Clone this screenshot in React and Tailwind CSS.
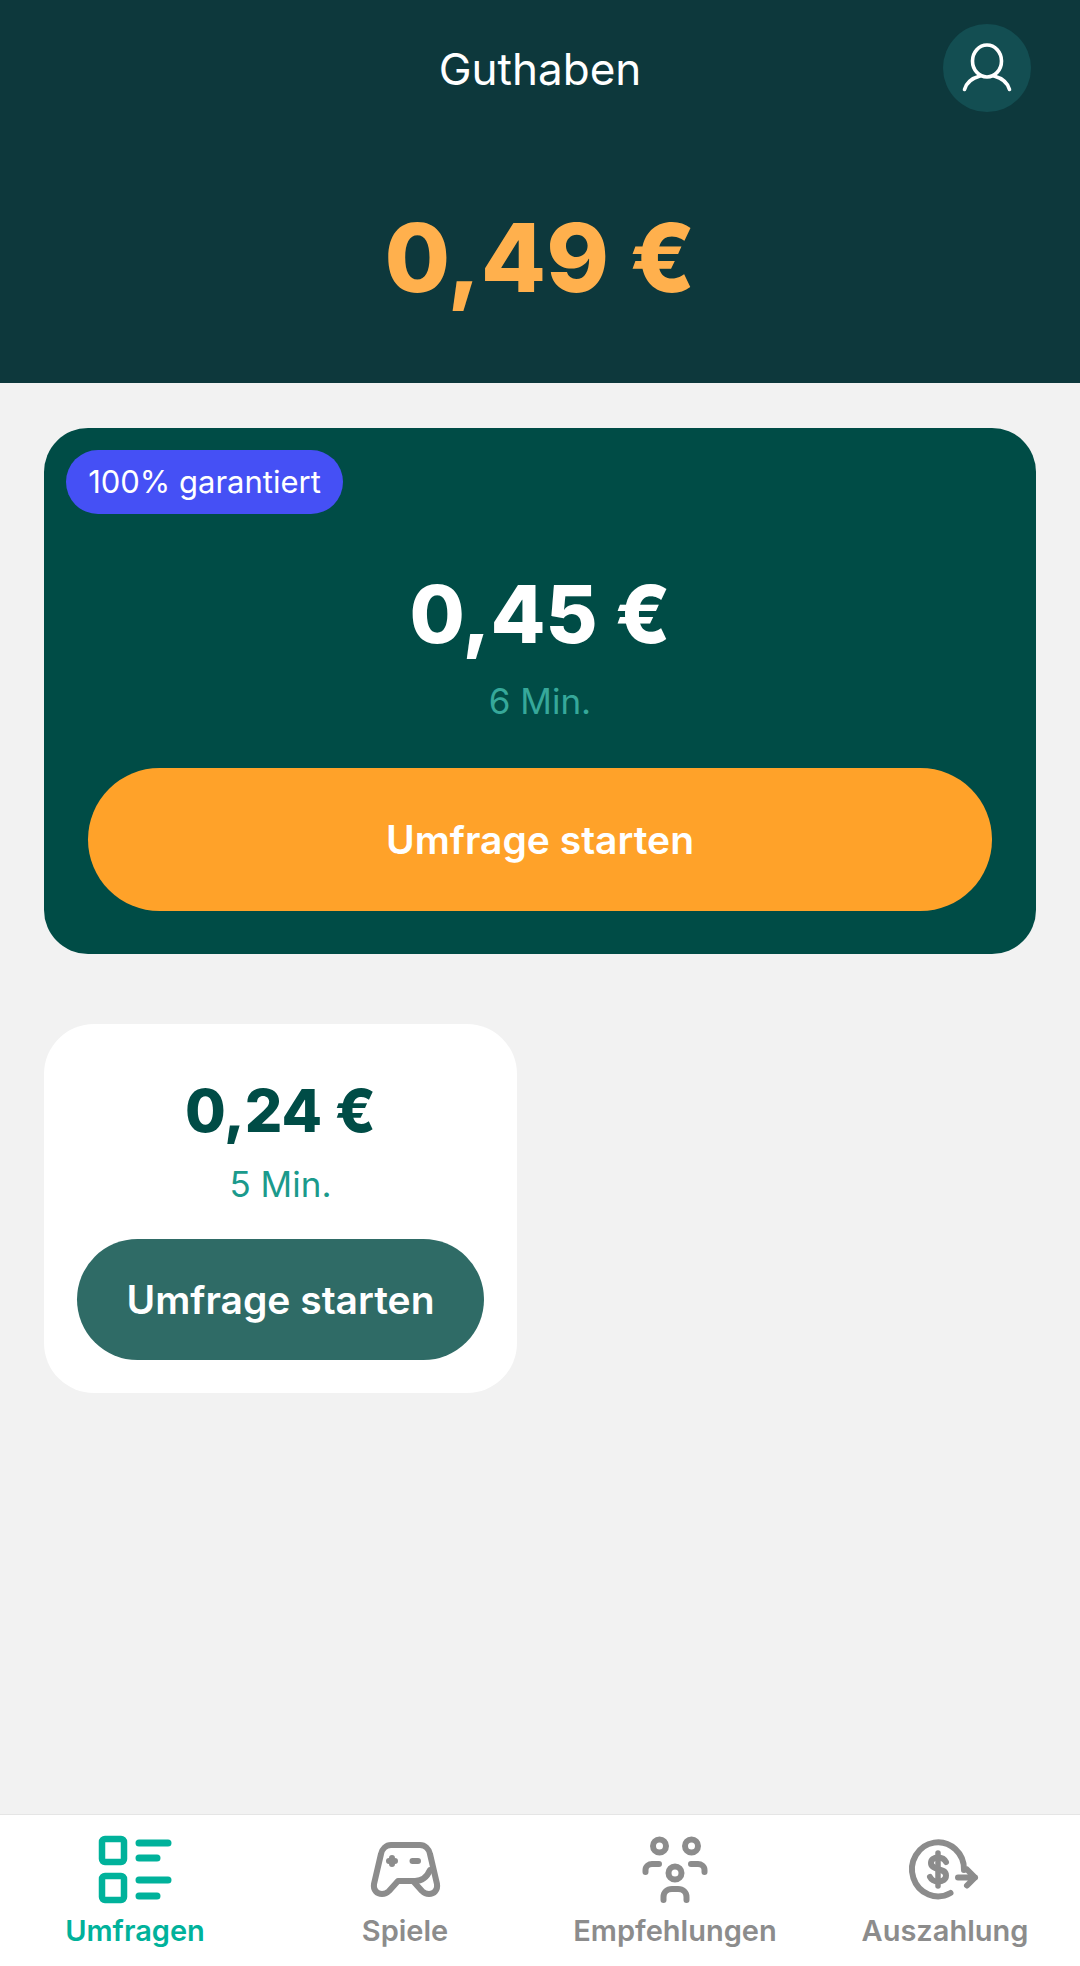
import React from 'react';

const font = { fontFamily: 'Inter, "Liberation Sans", sans-serif' };

// Bottom bar icons, all drawn in an 80x80 box
const ListIcon = () => (
    <svg viewBox="0 0 80 80" className="w-20 h-20" fill="none" stroke="currentColor" strokeWidth="6.5" strokeLinecap="round">
        <rect x="7" y="9" width="22" height="23" rx="3" />
        <rect x="7" y="46" width="22" height="24" rx="3" />
        <path d="M44 13H73M44 28H62M44 50H73M44 66H62" strokeWidth="7" />
    </svg>
);

const GamepadIcon = () => (
    <svg viewBox="0 0 80 80" className="w-20 h-20" fill="none" stroke="currentColor" strokeWidth="6" strokeLinecap="round" strokeLinejoin="round">
        <path d="M26 15H55C60 15 64 19 65 24L72 54C73 60 69 64 64 64C61 64 59 63 57 61L48 51H33L24 61C22 63 20 64 17 64C12 64 8 60 9 54L16 24C17 19 21 15 26 15Z" />
        <path d="M46 51H50C57 51 62 47 65 40" />
        <path d="M24 31H30M27 28V34M47.5 31H53" strokeWidth="6" />
    </svg>
);

const PeopleIcon = () => (
    <svg viewBox="0 0 80 80" className="w-20 h-20" fill="none" stroke="currentColor" strokeWidth="6" strokeLinecap="round">
        <circle cx="24.5" cy="16" r="6.5" />
        <circle cx="56.5" cy="16" r="6.5" />
        <circle cx="40" cy="43" r="6.5" />
        <path d="M10.5 42V40C10.5 36 14 34 17 34H24" />
        <path d="M69.5 42V40C69.5 36 66 34 63 34H56" />
        <path d="M28.5 70V67C28.5 62 32 59 37 59H43C48 59 51.5 62 51.5 67V70" />
    </svg>
);

const PayoutIcon = () => (
    <svg viewBox="0 0 80 80" className="w-20 h-20" fill="none" stroke="currentColor" strokeWidth="6" strokeLinecap="round" strokeLinejoin="round">
        <path d="M59 40A26 27 0 1 0 45.5 63" />
        <path d="M53 47.5H70M62 39.5L70 47.5L62 55.5" />
        <path d="M41 32C39.5 29 36.5 27.5 33 27.5C29 27.5 26 29.5 26 33C26 41 41 37 41 45.5C41 49.5 37.5 51.5 33 51.5C29.5 51.5 26.5 50 25 47" strokeWidth="6" />
        <path d="M33 23V56" strokeWidth="5.5" />
    </svg>
);

const tabs = [
    { label: 'Umfragen', Icon: ListIcon, active: true },
    { label: 'Spiele', Icon: GamepadIcon },
    { label: 'Empfehlungen', Icon: PeopleIcon },
    { label: 'Auszahlung', Icon: PayoutIcon },
];

const App = () => (
    <div className="flex flex-col h-[1966px] bg-[#f2f2f2] overflow-hidden" style={font}>
        {/* Balance header */}
        <header className="h-[383px] shrink-0 bg-[#0d383c] flex flex-col items-center relative">
            <h1 className="mt-[44px] text-[44px] leading-[50px] font-normal text-white">Guthaben</h1>
            <div className="absolute right-[49px] top-[24px] w-[88px] h-[88px] rounded-full bg-[#134e52] text-white">
                <svg viewBox="0 0 88 88" className="w-full h-full" fill="none" stroke="currentColor" strokeWidth="3.6" strokeLinecap="round">
                    <ellipse cx="44" cy="37" rx="14.5" ry="16" />
                    <path d="M21.5 65.5C23.5 58.5 29.5 54 37 52" />
                    <path d="M66.5 65.5C64.5 58.5 58.5 54 51 52" />
                </svg>
            </div>
            <div className="mt-[108px] text-[95px] leading-[112px] font-extrabold text-[#ffb04d]">0,49 €</div>
        </header>

        <main className="flex-1 px-[44px] pt-[45px]">
            {/* Featured survey */}
            <section className="h-[526px] rounded-[44px] bg-[#004c46] relative flex flex-col items-center">
                <span className="absolute left-[22px] top-[22px] h-[64px] w-[277px] rounded-full bg-[#4550f5] flex items-center justify-center pt-[1px] text-[31px] text-white">100% garantiert</span>
                <div className="mt-[140px] text-[80px] leading-[92px] font-extrabold text-white">0,45 €</div>
                <div className="mt-[21px] text-[35px] leading-[40px] text-[#36a89a]">6 Min.</div>
                <button className="mt-[47px] w-[904px] h-[143px] rounded-full bg-[#ffa229] text-white text-[39px] font-semibold pt-[2px]">Umfrage starten</button>
            </section>

            {/* Regular survey */}
            <section className="mt-[70px] w-[473px] h-[369px] rounded-[50px] bg-white flex flex-col items-center">
                <div className="mt-[53px] text-[59px] leading-[68px] font-extrabold text-[#004c46]">0,24 €</div>
                <div className="mt-[19px] text-[35px] leading-[40px] text-[#1a9a8c]">5 Min.</div>
                <button className="mt-[35px] w-[407px] h-[121px] rounded-full bg-[#2f6b66] text-white text-[39px] font-semibold pt-[2px]">Umfrage starten</button>
            </section>
        </main>

        {/* Bottom navigation */}
        <nav className="h-[152px] shrink-0 bg-white border-t border-[#e5e5e5] grid grid-cols-4">
            {tabs.map(({ label, Icon, active }) => (
                <div key={label} className={`flex flex-col items-center pt-[15px] ${active ? 'text-[#00b29b]' : 'text-[#8c8c8c]'}`}>
                    <Icon />
                    <span className="mt-[3px] text-[29px] leading-[36px] font-semibold whitespace-nowrap">{label}</span>
                </div>
            ))}
        </nav>
    </div>
);

export default App;
